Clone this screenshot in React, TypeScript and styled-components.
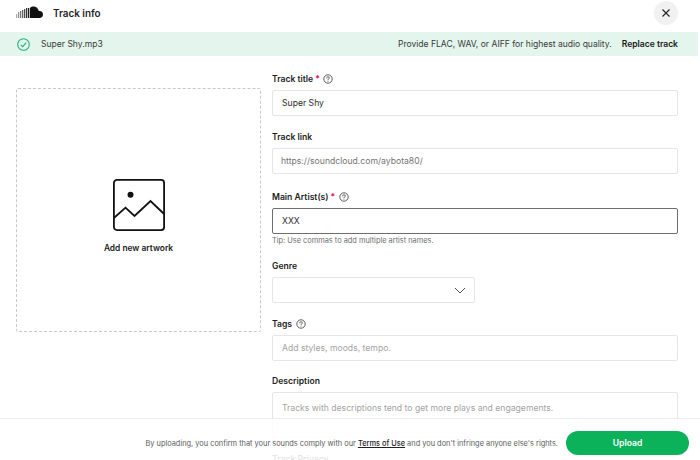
import React from "react";
import styled, { createGlobalStyle } from "styled-components";

const Global = createGlobalStyle`
  html, body { margin: 0; padding: 0; background: #fff; }
  body { font-family: Inter, "Noto Sans", sans-serif; color: #1a1a1a; -webkit-font-smoothing: antialiased; }
  * { box-sizing: border-box; }
`;

const Page = styled.div`
  position: relative;
  width: 700px;
  height: 460px;
  overflow: hidden;
  background: #fff;
`;
const Header = styled.header`
  height: 32px;
  display: flex;
  align-items: center;
  padding: 0 22px 7px 16px;
  gap: 9px;
`;
const Title = styled.h1`
  margin: 0;
  flex: 1;
  font-size: 9.9px;
  font-weight: 600;
  color: #1f1f1f;
`;
const Close = styled.button`
  width: 24px;
  height: 24px;
  border: 0;
  padding: 0;
  border-radius: 50%;
  background: #f1f1f1;
  display: flex;
  align-items: center;
  justify-content: center;
`;
const Banner = styled.div`
  height: 24px;
  width: 698px;
  background: #e3f5ec;
  display: flex;
  align-items: center;
  padding: 0 20px 0 17px;
  font-size: 8.55px;
  color: #3a3a3a;
`;
const FileName = styled.span`
  margin-left: 11px;
  flex: 1;
`;
const Replace = styled.span`
  margin-left: 10px;
  font-weight: 600;
  color: #1a1a1a;
`;
const Body = styled.div`
  display: grid;
  grid-template-columns: 245px 406px;
  column-gap: 11px;
  padding: 16px 0 0 16px;
  align-items: start;
`;
const Drop = styled.div`
  margin-top: 16px;
  height: 244px;
  border: 1px dashed #c8c8c8;
  border-radius: 2px;
  display: flex;
  flex-direction: column;
  align-items: center;
  justify-content: center;
  padding-top: 13px;
  gap: 12px;
`;
const DropText = styled.span`
  font-size: 8.4px;
  line-height: 11px;
  font-weight: 600;
  color: #1a1a1a;
`;
const Fields = styled.div`
  display: flex;
  flex-direction: column;
`;
const Field = styled.div<{ $lift?: boolean; $gapBefore?: boolean }>`
  display: flex;
  flex-direction: column;
  margin-bottom: 14px;
  margin-top: ${(p) => (p.$gapBefore ? "2px" : p.$lift ? "-1px" : "0")};
`;
const Label = styled.label`
  height: 13px;
  margin-bottom: 5px;
  display: flex;
  align-items: center;
  font-size: 8.6px;
  font-weight: 600;
  color: #222;
`;
const Star = styled.span`
  color: #e5004f;
  margin-left: 2px;
`;
const Help = styled.svg`
  margin-left: 3.5px;
`;
const Box = styled.div<{ $active?: boolean; $muted?: boolean; $faint?: boolean; $narrow?: boolean; $tall?: boolean }>`
  height: ${(p) => (p.$tall ? "46px" : "26px")};
  width: ${(p) => (p.$narrow ? "203px" : "100%")};
  border: 1px solid ${(p) => (p.$active ? "#6e6e6e" : "#e6e6e6")};
  border-radius: 2px;
  display: flex;
  align-items: ${(p) => (p.$tall ? "flex-start" : "center")};
  justify-content: ${(p) => (p.$narrow ? "flex-end" : "flex-start")};
  padding: ${(p) => (p.$tall ? "10px 9px 0" : p.$narrow ? "0 8px 0 10px" : p.$muted ? "0 8px" : "0 9px")};
  font-size: 8.65px;
  color: ${(p) => (p.$faint ? "#a3a3a3" : p.$muted ? "#757575" : "#2a2a2a")};
`;
const Tip = styled.div`
  margin: 1px 0 -1px;
  font-size: 7.4px;
  line-height: 11px;
  color: #6e6e6e;
`;
const Footer = styled.footer`
  position: absolute;
  left: 0;
  right: 0;
  top: 418px;
  height: 42px;
  background: rgba(255, 255, 255, 0.88);
  border-top: 1px solid #ececec;
  display: flex;
  align-items: center;
  justify-content: flex-end;
  padding: 7px 11px 0 0;
  font-size: 7.4px;
  color: #5c5c5c;
`;
const Terms = styled.span`
  color: #222;
  font-weight: 500;
  text-decoration: underline;
`;
const Upload = styled.button`
  width: 123px;
  height: 24px;
  margin-left: 8px;
  border: 0;
  border-radius: 12px;
  background: #0bb25a;
  color: #fff;
  font: 600 8.6px Inter, sans-serif;
`;

const HelpIcon = () => (
  <Help width="10" height="10" viewBox="0 0 10 10" fill="none" stroke="#333" strokeWidth="0.8">
    <circle cx="5" cy="5" r="4.2" />
    <path d="M3.700 4c0-.8.6-1.300 1.300-1.300s1.300.5 1.300 1.200c0 1-1.300 1-1.300 2" strokeLinecap="round" />
    <circle cx="5" cy="7.300" r="0.45" fill="#333" stroke="none" />
  </Help>
);

const bars = [
  { x: 0, h: 4, o: 0.35 },
  { x: 2, h: 6, o: 0.45 },
  { x: 4, h: 7, o: 0.55 },
  { x: 6, h: 8, o: 0.65 },
  { x: 8, h: 9, o: 0.75 },
  { x: 10, h: 10, o: 0.85 },
  { x: 12, h: 10, o: 0.95 },
];

export default function App() {
  return (
    <Page>
      <Global />
      <Header>
        <svg width="28" height="13" viewBox="0 0 28 13" fill="#111">
          {bars.map((b) => (
            <rect key={b.x} x={b.x} y={12 - b.h} width="1.300" height={b.h} opacity={b.o} />
          ))}
          <path d="M14 12V2C15 1 16.200.6 17.500.6c2.700 0 4.800 1.900 5.300 4.500 2.300-.6 4.200 1 4.200 3.400 0 2-1.500 3.500-3.400 3.500z" />
        </svg>
        <Title>Track info</Title>
        <Close aria-label="Close">
          <svg width="10" height="10" viewBox="0 0 10 10" stroke="#222" strokeWidth="1.100">
            <path d="M1.500 1.500l7 7M8.500 1.500l-7 7" />
          </svg>
        </Close>
      </Header>
      <Banner>
        <svg width="13" height="13" viewBox="0 0 13 13" fill="none" stroke="#1fb47a" strokeWidth="1.100">
          <circle cx="6.500" cy="6.500" r="5.800" />
          <path d="M3.800 6.800l1.900 1.900 3.600-4" />
        </svg>
        <FileName>Super Shy.mp3</FileName>
        <span>Provide FLAC, WAV, or AIFF for highest audio quality.</span>
        <Replace>Replace track</Replace>
      </Banner>
      <Body>
        <Drop>
          <svg width="52" height="52" viewBox="0 0 52 52" fill="none" stroke="#111" strokeWidth="1.800">
            <rect x="0.900" y="0.900" width="50.200" height="50.200" rx="3" />
            <circle cx="17.500" cy="15.700" r="3" fill="#111" stroke="none" />
            <path d="M0.900 39L12.500 28.700l9 8.300 16-15 13.600 13" />
          </svg>
          <DropText>Add new artwork</DropText>
        </Drop>
        <Fields>
          <Field>
            <Label>Track title<Star>*</Star><HelpIcon /></Label>
            <Box>Super Shy</Box>
          </Field>
          <Field>
            <Label>Track link</Label>
            <Box $muted>https://soundcloud.com/aybota80/</Box>
          </Field>
          <Field $gapBefore>
            <Label>Main Artist(s)<Star>*</Star><HelpIcon /></Label>
            <Box $active>XXX</Box>
            <Tip>Tip: Use commas to add multiple artist names.</Tip>
          </Field>
          <Field>
            <Label>Genre</Label>
            <Box $narrow>
              <svg width="12" height="7" viewBox="0 0 12 7" fill="none" stroke="#555" strokeWidth="1">
                <path d="M1 1l5 5 5-5" />
              </svg>
            </Box>
          </Field>
          <Field>
            <Label>Tags<HelpIcon /></Label>
            <Box $faint>Add styles, moods, tempo.</Box>
          </Field>
          <Field $lift>
            <Label>Description</Label>
            <Box $faint $tall>Tracks with descriptions tend to get more plays and engagements.</Box>
          </Field>
          <Field>
            <Label>Track Privacy</Label>
          </Field>
        </Fields>
      </Body>
      <Footer>
        <span>
          By uploading, you confirm that your sounds comply with our <Terms>Terms of Use</Terms> and you don't infringe anyone else's rights.
        </span>
        <Upload>Upload</Upload>
      </Footer>
    </Page>
  );
}
